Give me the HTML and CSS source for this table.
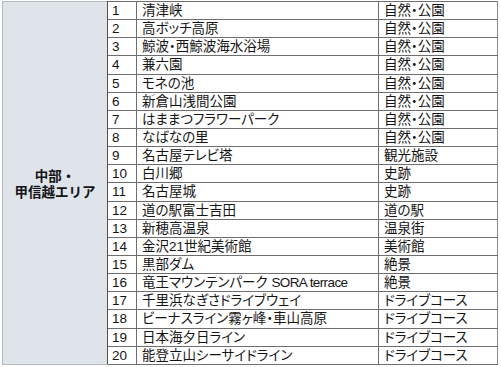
FILE: index.html
```html
<!DOCTYPE html>
<html lang="ja">
<head>
<meta charset="utf-8">
<link rel="stylesheet" href="styles.css">
</head>
<body>
<table class="spots">
  <colgroup>
    <col class="c-area"><col class="c-num"><col class="c-name"><col class="c-cat">
  </colgroup>
  <tbody>
    <tr><th class="area" rowspan="20">中部・<br>甲信越エリア</th><td class="num">1</td><td>清津峡</td><td>自然・公園</td></tr>
    <tr><td class="num">2</td><td>高ボッチ高原</td><td>自然・公園</td></tr>
    <tr><td class="num">3</td><td>鯨波・西鯨波海水浴場</td><td>自然・公園</td></tr>
    <tr><td class="num">4</td><td>兼六園</td><td>自然・公園</td></tr>
    <tr><td class="num">5</td><td>モネの池</td><td>自然・公園</td></tr>
    <tr><td class="num">6</td><td>新倉山浅間公園</td><td>自然・公園</td></tr>
    <tr><td class="num">7</td><td>はままつフラワーパーク</td><td>自然・公園</td></tr>
    <tr><td class="num">8</td><td>なばなの里</td><td>自然・公園</td></tr>
    <tr><td class="num">9</td><td>名古屋テレビ塔</td><td>観光施設</td></tr>
    <tr><td class="num">10</td><td>白川郷</td><td>史跡</td></tr>
    <tr><td class="num">11</td><td>名古屋城</td><td>史跡</td></tr>
    <tr><td class="num">12</td><td>道の駅富士吉田</td><td>道の駅</td></tr>
    <tr><td class="num">13</td><td>新穂高温泉</td><td>温泉街</td></tr>
    <tr><td class="num">14</td><td>金沢21世紀美術館</td><td>美術館</td></tr>
    <tr><td class="num">15</td><td>黒部ダム</td><td>絶景</td></tr>
    <tr><td class="num">16</td><td>竜王マウンテンパーク <span class="cond">SORA terrace</span></td><td>絶景</td></tr>
    <tr><td class="num">17</td><td>千里浜なぎさドライブウェイ</td><td>ドライブコース</td></tr>
    <tr><td class="num">18</td><td>ビーナスライン霧ヶ峰・車山高原</td><td>ドライブコース</td></tr>
    <tr><td class="num">19</td><td>日本海夕日ライン</td><td>ドライブコース</td></tr>
    <tr><td class="num">20</td><td>能登立山シーサイドライン</td><td>ドライブコース</td></tr>
  </tbody>
</table>
</body>
</html>
```

FILE: styles.css
```css
html, body {
  margin: 0;
  padding: 0;
  background: #ffffff;
}

body {
  padding: 1px 0 0 2px;
  font-family: "Liberation Sans", "Noto Sans CJK JP", sans-serif;
  color: #141414;
}

.spots {
  border-collapse: collapse;
  table-layout: fixed;
  width: 495px;
  font-size: 13.5px;
  font-feature-settings: "palt";
}

.c-area { width: 105px; }
.c-num { width: 29px; }
.c-name { width: 242px; }
.c-cat { width: 119px; }

.spots tr {
  height: 18.15px;
}

.spots td {
  border: 1px solid #6e6e6e;
  padding: 1px 4px 0 5px;
  line-height: 16px;
  white-space: nowrap;
  overflow: hidden;
  vertical-align: middle;
}

.spots td.num {
  padding-left: 4px;
}

.spots td:last-child {
  border-right-color: #8a8a8a;
}

.area {
  background: #dfe3ea;
  border: 1px solid #b4b8bf;
  border-right: 1px solid #505050;
  font-weight: bold;
  font-size: 13.5px;
  line-height: 16px;
  text-align: center;
  vertical-align: middle;
  padding: 5px 0 0 0;
  font-feature-settings: normal;
}

.cond {
  letter-spacing: -0.6px;
}
```
